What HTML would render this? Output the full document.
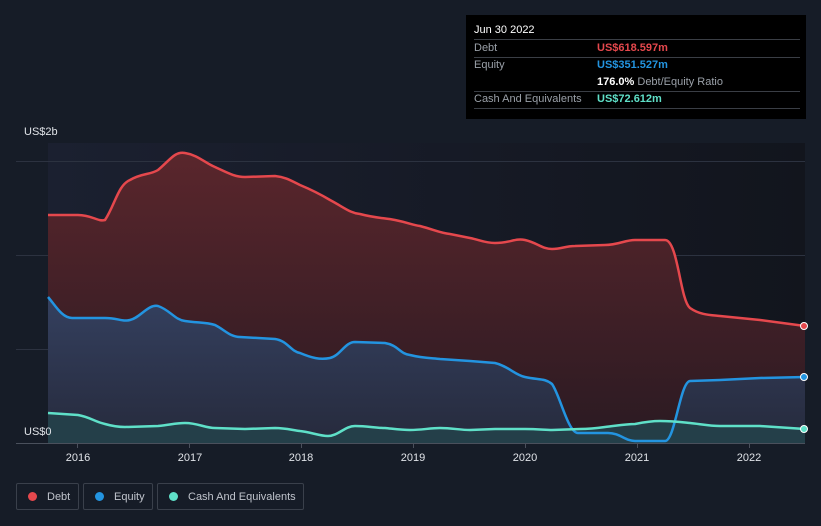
<!DOCTYPE html>
<html><head><meta charset="utf-8"><style>
body{margin:0;background:#161c27;font-family:"Liberation Sans",sans-serif;}
.wrap{position:relative;width:821px;height:526px;overflow:hidden;background:#161c27}
.tt{position:absolute;left:466px;top:15px;width:340px;height:104px;background:#000;font-size:11px;color:#9aa0a8}
.tt .r{position:absolute;left:8px;right:6px;border-bottom:1px solid #3a3e45;height:17px;line-height:17px}
.lg{position:absolute;top:483px;height:27px;border:1px solid #3a404b;border-radius:2px;color:#c0c4cc;font-size:11px;line-height:27px;box-sizing:border-box}
.lg i{display:inline-block;width:9px;height:9px;border-radius:50%;margin:0 10px 0 11px;vertical-align:-1px}
</style></head><body><div class="wrap">
<svg width="821" height="526" style="position:absolute;left:0;top:0">
<defs>
<linearGradient id="gd" x1="0" y1="0" x2="0" y2="1"><stop offset="0" stop-color="#5a262c"/><stop offset="1" stop-color="#2a1a22"/></linearGradient>
<linearGradient id="ge" x1="0" y1="0" x2="0" y2="1"><stop offset="0" stop-color="#34405f"/><stop offset="1" stop-color="#262a3c"/></linearGradient>
<linearGradient id="gb" x1="0" y1="0" x2="1" y2="0"><stop offset="0" stop-color="#1b2030"/><stop offset="1" stop-color="#12151d"/></linearGradient>
</defs>
<rect x="48" y="143" width="757" height="300" fill="url(#gb)"/>
<g stroke="#2c3240" stroke-width="1">
<line x1="16" y1="161.5" x2="805" y2="161.5"/><line x1="16" y1="255.5" x2="805" y2="255.5"/><line x1="16" y1="349.5" x2="805" y2="349.5"/></g>
<path fill="url(#gd)" d="M48,215 L78,215 C92,215 98,222 105,220 C115,205 118,185 130,180 C142,173 150,175 158,170 C170,160 175,151 185,153 C198,155 205,163 215,167 C228,173 235,177 245,177 L275,176 C285,177 290,180 300,185 C312,190 320,194 330,200 C345,208 350,213 360,214 C375,218 385,218 395,220 C410,223 412,225 420,226 C435,230 440,233 450,234 C460,236 465,237 470,238 C480,240 485,243 495,243 C510,243 515,238 525,240 C538,243 542,249 552,249 C562,249 565,246 575,246 L605,245 C618,245 625,240 635,240 L665,240 C678,240 680,300 690,308 C700,315 710,315 720,316 L760,320 L790,324 L805,326 L805,443 L48,443Z"/>
<path fill="url(#ge)" d="M48,297 C55,305 62,318 72,318 L105,318 C118,318 122,322 130,320 C140,318 148,304 158,306 C170,310 175,320 185,321 C198,323 205,322 215,325 C225,330 230,337 240,337 L275,339 C288,341 290,351 300,353 C312,358 320,360 330,358 C340,356 345,342 355,342 L385,343 C398,345 400,354 410,355 C422,358 430,358 440,359 L470,361 L495,363 C508,366 515,375 525,377 C538,380 545,378 552,384 C560,395 568,433 578,433 L608,433 C620,433 625,441 635,441 L665,441 C675,441 680,382 690,381 L720,380 L760,378 L805,377 L805,443 L48,443Z"/>
<path fill="#24404a" d="M48,413 L78,415 C90,417 95,422 105,424 C112,426 118,427 125,427 L158,426 C170,425 175,423 185,423 C198,423 205,428 215,428 L245,429 L275,428 C285,428 292,430 300,431 C310,432 320,436 328,436 C338,436 345,426 355,426 C368,426 375,428 385,428 C395,429 402,430 410,430 C422,430 430,428 440,428 C452,428 460,430 470,430 L495,429 L525,429 C538,429 545,430 552,430 L580,429 C590,429 598,428 605,427 C615,426 625,424 635,424 C645,422 652,421 660,421 C672,421 680,422 690,423 C700,424 710,426 720,426 L760,426 L805,429 L805,443 L48,443Z" opacity=".95"/>
<g fill="none" stroke-width="2.5">
<path stroke="#e5484d" d="M48,215 L78,215 C92,215 98,222 105,220 C115,205 118,185 130,180 C142,173 150,175 158,170 C170,160 175,151 185,153 C198,155 205,163 215,167 C228,173 235,177 245,177 L275,176 C285,177 290,180 300,185 C312,190 320,194 330,200 C345,208 350,213 360,214 C375,218 385,218 395,220 C410,223 412,225 420,226 C435,230 440,233 450,234 C460,236 465,237 470,238 C480,240 485,243 495,243 C510,243 515,238 525,240 C538,243 542,249 552,249 C562,249 565,246 575,246 L605,245 C618,245 625,240 635,240 L665,240 C678,240 680,300 690,308 C700,315 710,315 720,316 L760,320 L790,324 L805,326"/>
<path stroke="#2394e0" d="M48,297 C55,305 62,318 72,318 L105,318 C118,318 122,322 130,320 C140,318 148,304 158,306 C170,310 175,320 185,321 C198,323 205,322 215,325 C225,330 230,337 240,337 L275,339 C288,341 290,351 300,353 C312,358 320,360 330,358 C340,356 345,342 355,342 L385,343 C398,345 400,354 410,355 C422,358 430,358 440,359 L470,361 L495,363 C508,366 515,375 525,377 C538,380 545,378 552,384 C560,395 568,433 578,433 L608,433 C620,433 625,441 635,441 L665,441 C675,441 680,382 690,381 L720,380 L760,378 L805,377"/>
<path stroke="#5fe0c8" d="M48,413 L78,415 C90,417 95,422 105,424 C112,426 118,427 125,427 L158,426 C170,425 175,423 185,423 C198,423 205,428 215,428 L245,429 L275,428 C285,428 292,430 300,431 C310,432 320,436 328,436 C338,436 345,426 355,426 C368,426 375,428 385,428 C395,429 402,430 410,430 C422,430 430,428 440,428 C452,428 460,430 470,430 L495,429 L525,429 C538,429 545,430 552,430 L580,429 C590,429 598,428 605,427 C615,426 625,424 635,424 C645,422 652,421 660,421 C672,421 680,422 690,423 C700,424 710,426 720,426 L760,426 L805,429"/>
</g>
<circle cx="804" cy="326" r="3.5" fill="#e5484d" stroke="#fff" stroke-width="1"/>
<circle cx="804" cy="377" r="3.5" fill="#2394e0" stroke="#fff" stroke-width="1"/>
<circle cx="804" cy="429" r="3.5" fill="#5fe0c8" stroke="#fff" stroke-width="1"/>
<line x1="16" y1="443.5" x2="805" y2="443.5" stroke="#4a505c"/>
<g stroke="#4a505c"><line x1="77.5" y1="443" x2="77.5" y2="448"/><line x1="189.5" y1="443" x2="189.5" y2="448"/><line x1="301.5" y1="443" x2="301.5" y2="448"/><line x1="413.5" y1="443" x2="413.5" y2="448"/><line x1="525.5" y1="443" x2="525.5" y2="448"/><line x1="637.5" y1="443" x2="637.5" y2="448"/><line x1="749.5" y1="443" x2="749.5" y2="448"/></g>
<g fill="#e0e3e8" font-size="11" text-anchor="middle" font-family="Liberation Sans,sans-serif">
<text x="78" y="461">2016</text><text x="190" y="461">2017</text><text x="301" y="461">2018</text><text x="413" y="461">2019</text><text x="525" y="461">2020</text><text x="637" y="461">2021</text><text x="749" y="461">2022</text></g>
<text x="24" y="135" fill="#e0e3e8" font-size="11" font-family="Liberation Sans,sans-serif">US$2b</text>
<text x="24" y="435" fill="#e0e3e8" font-size="11" font-family="Liberation Sans,sans-serif">US$0</text>
</svg>
<div class="tt">
<div style="position:absolute;left:8px;top:9px;color:#fff">Jun 30 2022</div>
<div class="r" style="top:25px;border-top:1px solid #3a3e45;top:24px">Debt<span style="position:absolute;left:123px;color:#e5484d;font-weight:bold">US$618.597m</span></div>
<div class="r" style="top:42px;border:none">Equity<span style="position:absolute;left:123px;color:#2394e0;font-weight:bold">US$351.527m</span></div>
<div class="r" style="top:59px"><span style="position:absolute;left:123px"><b style="color:#fff">176.0%</b> Debt/Equity Ratio</span></div>
<div class="r" style="top:76px">Cash And Equivalents<span style="position:absolute;left:123px;color:#5fe0c8;font-weight:bold">US$72.612m</span></div>
</div>
<div class="lg" style="left:16px;width:63px"><i style="background:#e5484d"></i>Debt</div>
<div class="lg" style="left:83px;width:70px"><i style="background:#2394e0"></i>Equity</div>
<div class="lg" style="left:157px;width:147px"><i style="background:#5fe0c8"></i>Cash And Equivalents</div>
</div></body></html>
